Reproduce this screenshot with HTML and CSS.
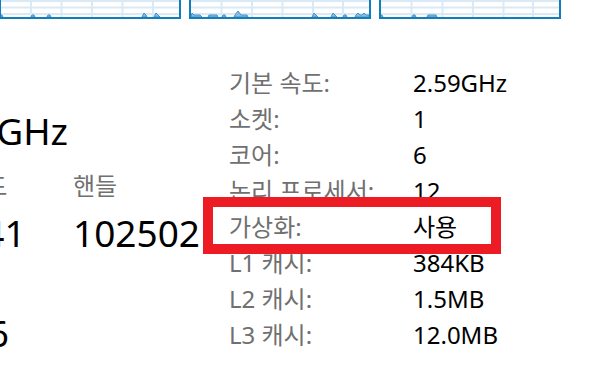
FILE: index.html
```html
<!DOCTYPE html>
<html lang="ko">
<head>
<meta charset="utf-8">
<title>CPU</title>
<link rel="stylesheet" href="styles.css">
</head>
<body>
<div class="graphs">
  <div class="graph">
    <svg width="178" height="17" viewBox="0 0 178 17">
      <g class="grid">
        <line x1="0" y1="1" x2="178" y2="1"/><line x1="0" y1="7.5" x2="178" y2="7.5"/><line x1="0" y1="14" x2="178" y2="14"/>
        <line x1="30" y1="0" x2="30" y2="17"/><line x1="60.5" y1="0" x2="60.5" y2="17"/><line x1="91" y1="0" x2="91" y2="17"/><line x1="121.5" y1="0" x2="121.5" y2="17"/><line x1="152" y1="0" x2="152" y2="17"/>
      </g>
      <g class="load">
        <polygon points="-1,17 0,15 1,15 2,17"/>
        <polygon points="30,17 31,15 33,15 34,17"/>
        <polygon points="46,17 47,15 49,15 50,17"/>
        <polygon points="141,17 143,13 145,15 146,17"/>
        <polygon points="153,17 155,13 157,15 159,17"/>
      </g>
    </svg>
  </div>
  <div class="graph">
    <svg width="178" height="17" viewBox="0 0 178 17">
      <g class="grid">
        <line x1="0" y1="1" x2="178" y2="1"/><line x1="0" y1="7.5" x2="178" y2="7.5"/><line x1="0" y1="14" x2="178" y2="14"/>
        <line x1="30.5" y1="0" x2="30.5" y2="17"/><line x1="61" y1="0" x2="61" y2="17"/><line x1="91.5" y1="0" x2="91.5" y2="17"/><line x1="122" y1="0" x2="122" y2="17"/><line x1="152" y1="0" x2="152" y2="17"/>
      </g>
      <g class="load">
        <polygon points="0,17 1,13 3,15 9,15 11,17"/>
        <polygon points="17,17 18,15 26,15 27,17"/>
        <polygon points="31,17 32,15 34,15 35,17"/>
        <polygon points="43,17 44,15 47,11 50,15 56,15 57,17"/>
        <polygon points="121,17 123,13 125,15 127,17"/>
        <polygon points="140,17 142,13 144,15 146,17"/>
        <polygon points="152,17 153,15 155,15 156,17"/>
        <polygon points="164,17 165,15 167,13 169,15 171,15 173,13 175,15 178,15 178,17"/>
      </g>
    </svg>
  </div>
  <div class="graph">
    <svg width="178" height="17" viewBox="0 0 178 17">
      <g class="grid">
        <line x1="0" y1="1" x2="178" y2="1"/><line x1="0" y1="7.5" x2="178" y2="7.5"/><line x1="0" y1="14" x2="178" y2="14"/>
        <line x1="30.5" y1="0" x2="30.5" y2="17"/><line x1="61.5" y1="0" x2="61.5" y2="17"/><line x1="92" y1="0" x2="92" y2="17"/><line x1="122.5" y1="0" x2="122.5" y2="17"/><line x1="152" y1="0" x2="152" y2="17"/>
      </g>
      <g class="load">
        <polygon points="-1,17 0,15 1,15 2,17"/>
        <polygon points="31,17 32,15 34,15 35,17"/>
        <polygon points="46,17 47,15 55,15 56,17"/>
      </g>
    </svg>
  </div>
</div>

<div class="main">
  <div class="summary">
    <div class="speed"><span>2.59GHz</span></div>
    <div class="stats">
      <div class="stat-label">스레드</div>
      <div class="stat-label">핸들</div>
      <div class="stat-value">2841</div>
      <div class="stat-value">102502</div>
    </div>
    <div class="uptime"><span>0:05:12:16</span></div>
  </div>

  <div class="details">
    <div class="label">기본 속도:</div><div class="value">2.59GHz</div>
    <div class="label">소켓:</div><div class="value">1</div>
    <div class="label">코어:</div><div class="value">6</div>
    <div class="label">논리 프로세서:</div><div class="value">12</div>
    <div class="label">가상화:</div><div class="value">사용</div>
    <div class="label">L1 캐시:</div><div class="value">384KB</div>
    <div class="label">L2 캐시:</div><div class="value">1.5MB</div>
    <div class="label">L3 캐시:</div><div class="value">12.0MB</div>
  </div>
</div>

<div class="highlight"></div>
</body>
</html>
```

FILE: styles.css
```css
html, body {
  margin: 0;
  padding: 0;
  background: #ffffff;
  overflow: hidden;
}

body {
  width: 611px;
  height: 371px;
  position: relative;
  font-family: "Noto Sans", "Noto Sans CJK KR", sans-serif;
  color: #000000;
}

.graphs {
  display: flex;
  gap: 8px;
  height: 19px;
  margin-left: -1px;
}

.graph {
  width: 182px;
  height: 19px;
  box-sizing: border-box;
  border: 2px solid #117dbb;
  border-top: none;
  flex: none;
  overflow: hidden;
}

.graph svg {
  display: block;
  overflow: visible;
}

.grid line {
  stroke: #d9eaf6;
  stroke-width: 2;
}

.load polygon {
  fill: #8cbde0;
  stroke: #3f93cc;
  stroke-width: 1;
}

.main {
  display: flex;
  align-items: flex-start;
}

.summary {
  flex: none;
  width: 288px;
  margin-left: -59px;
  padding-top: 93px;
}

.speed {
  display: flex;
  justify-content: flex-end;
  width: 127px;
  height: 37px;
  font-size: 37px;
  line-height: 37px;
  white-space: nowrap;
}

.speed span,
.uptime span {
  flex: none;
}

.stats {
  display: grid;
  grid-template-columns: 132px auto;
  margin-top: 25px;
  row-gap: 16px;
  white-space: nowrap;
}

.stat-label {
  font-size: 24px;
  line-height: 24px;
  color: #707070;
}

.stat-value {
  font-size: 37px;
  line-height: 37px;
}

.uptime {
  display: flex;
  justify-content: flex-end;
  width: 68px;
  margin-top: 63px;
  font-size: 37px;
  line-height: 37px;
  white-space: nowrap;
}

.details {
  display: grid;
  grid-template-columns: 184px auto;
  grid-auto-rows: 36px;
  margin-top: 46px;
  font-size: 24px;
  line-height: 36px;
  white-space: nowrap;
}

.details .label {
  color: #707070;
}

.details .value {
  color: #000000;
}

.highlight {
  position: absolute;
  left: 203px;
  top: 197px;
  width: 298px;
  height: 57px;
  box-sizing: border-box;
  border: 10px solid #ed1c24;
}
```
